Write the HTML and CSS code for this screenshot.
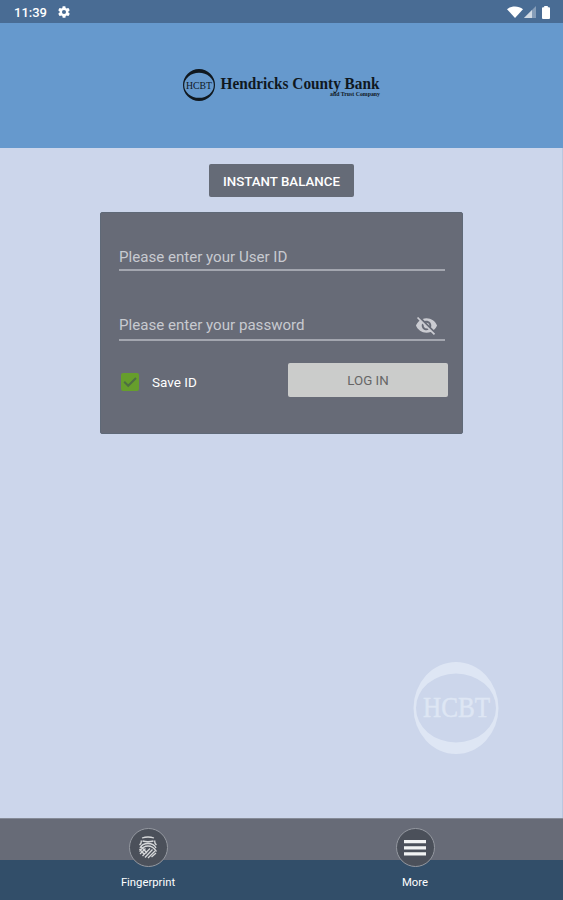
FILE: index.html
```
<!DOCTYPE html>
<html lang="en">

<head>
    <meta charset="UTF-8">
    <meta name="viewport" content="width=device-width, initial-scale=1.0">
    <title>Hendricks County Bank</title>
    <link rel="stylesheet" href="styles.css">
</head>

<body>
    <div class="status-bar">
        <span class="time">11:39</span>
        <svg class="gear" viewBox="0 0 24 24"><path fill-rule="evenodd" d="M19.4 13a7.5 7.5 0 0 0 0-2l2.1-1.7c.2-.1.3-.4.1-.6l-2-3.5c-.1-.2-.4-.3-.6-.2l-2.5 1a7.300 7.300 0 0 0-1.700-1l-.4-2.600A.5.5 0 0 0 14 2h-4a.5.5 0 0 0-.5.400L9.200 5a7.700 7.700 0 0 0-1.700 1L5 5a.5.5 0 0 0-.6.200l-2 3.500c-.1.2-.1.500.1.600L4.600 11a7.900 7.900 0 0 0 0 2l-2.100 1.700c-.2.100-.2.400-.1.600l2 3.500c.1.200.4.300.6.200l2.500-1c.5.400 1.100.8 1.700 1l.4 2.600c0 .2.200.400.400.400h4c.3 0 .5-.2.500-.400l.4-2.600c.6-.3 1.200-.6 1.700-1l2.500 1c.2.100.5 0 .6-.2l2-3.500c.1-.2.100-.5-.1-.600zM12 15.500a3.500 3.500 0 1 1 0-7 3.500 3.500 0 0 1 0 7z"/></svg>
        <div class="status-icons">
            <svg class="wifi" viewBox="0 0 16 12"><path d="M0 3.200C4.500-.4 11.500-.4 16 3.200L8 12z"/></svg>
            <svg class="signal" viewBox="0 0 12 12"><path class="signal-off" d="M0 12L12 0v12z"/><path d="M0 12l8-8v8z"/></svg>
            <svg class="battery" viewBox="0 0 8 13"><path d="M2.200 0h3.600v1.200H7q1 0 1 1V12q0 1-1 1H1q-1 0-1-1V2.200q0-1 1-1h1.200z"/></svg>
        </div>
    </div>

    <header class="header">
        <svg class="logo" viewBox="0 0 210 36">
            <path fill-rule="evenodd" d="M17 2a16 16 0 1 1 0 32a16 16 0 1 1 0-32zM17 5.800a14.800 12.500 0 1 0 0 25a14.800 12.500 0 1 0 0-25z"/>
            <text class="logo-mark" x="4" y="21.800" textLength="26" lengthAdjust="spacingAndGlyphs">HCBT</text>
            <text class="logo-name" x="38.500" y="21.500" textLength="159" lengthAdjust="spacingAndGlyphs">Hendricks County Bank</text>
            <text class="logo-sub" x="148" y="29" textLength="50" lengthAdjust="spacingAndGlyphs">and Trust Company</text>
        </svg>
    </header>

    <main class="main">
        <button class="balance-btn">INSTANT BALANCE</button>

        <div class="login-card">
            <div class="field user-field">Please enter your User ID</div>
            <div class="field password-field">
                <span>Please enter your password</span>
                <svg class="eye-off" viewBox="0 0 24 24"><path d="M12 7c2.760 0 5 2.240 5 5 0 .65-.13 1.260-.36 1.830l2.920 2.920c1.510-1.260 2.700-2.890 3.430-4.750-1.730-4.390-6-7.500-11-7.500-1.400 0-2.740.25-3.980.7l2.160 2.160C10.740 7.130 11.350 7 12 7zM2 4.270l2.280 2.280.46.460C3.080 8.300 1.780 10.020 1 12c1.730 4.390 6 7.500 11 7.500 1.550 0 3.030-.3 4.380-.84l.42.420L19.730 22 21 20.730 3.270 3 2 4.270zM7.530 9.800l1.550 1.550c-.05.210-.08.430-.08.650 0 1.660 1.340 3 3 3 .22 0 .44-.03.650-.08l1.550 1.550c-.67.330-1.410.53-2.200.53-2.760 0-5-2.240-5-5 0-.79.200-1.530.53-2.200zm4.310-.78l3.150 3.150.02-.16c0-1.660-1.340-3-3-3l-.17.010z"/></svg>
            </div>
            <div class="login-row">
                <span class="checkbox">
                    <svg viewBox="0 0 18 18"><path d="M3.200 8.800l4 4L15 5"/></svg>
                </span>
                <span class="save-label">Save ID</span>
                <button class="login-btn">LOG IN</button>
            </div>
        </div>

        <svg class="watermark" viewBox="0 0 86 92">
            <path fill-rule="evenodd" d="M43 0a42.500 46 0 1 1 0 92a42.500 46 0 1 1 0-92zM43 11.500a40 34.500 0 1 0 0 69a40 34.500 0 1 0 0-69z"/>
            <text x="10" y="55" textLength="67" lengthAdjust="spacingAndGlyphs">HCBT</text>
        </svg>
    </main>

    <nav class="bottom-nav">
        <div class="nav-item">
            <span class="nav-icon">
                <svg class="fingerprint" viewBox="0 0 20 23">
                    <path d="M4 2Q10 0 16 2M4.500 5Q10 6.500 15.500 5M3 4.500Q4 7 1.500 9M17 4.500Q16 7 18.500 9M2 12Q4 7.500 10 7.500T18 12M1.500 15.500Q5 10 10 10T18.500 15.500M2 18L7.500 12.500M4.500 20L12 12.500M7 21.500L14.500 13.500M10 22L17 15M13.500 21L18 17M3 10.500L9 17M1.500 13L6 18"/>
                </svg>
            </span>
            <span class="nav-label">Fingerprint</span>
        </div>
        <div class="nav-item">
            <span class="nav-icon">
                <svg class="menu" viewBox="0 0 22 16"><path d="M0 0h22v3.200H0zM0 6.200h22v3.200H0zM0 12.300h22v3.200H0z"/></svg>
            </span>
            <span class="nav-label">More</span>
        </div>
    </nav>
</body>

</html>
```

FILE: styles.css
```
* {
    box-sizing: border-box;
}

body {
    margin: 0;
    height: 900px;
    display: flex;
    flex-direction: column;
    overflow: hidden;
    font-family: Roboto, "Liberation Sans", sans-serif;
    background-color: #ccd6eb;
}

svg {
    display: block;
    flex-shrink: 0;
}

button {
    border: 0;
    padding: 0;
    font-family: inherit;
}

.status-bar {
    height: 23px;
    flex-shrink: 0;
    display: flex;
    align-items: center;
    padding: 1px 13px 0 14px;
    background-color: #496c94;
    color: #fff;
}

.status-bar svg {
    fill: #fff;
}

.time {
    width: 43px;
    font-size: 13px;
    font-weight: 500;
}

.gear {
    width: 14px;
    height: 14px;
}

.status-icons {
    display: flex;
    align-items: center;
    margin-left: auto;
}

.wifi {
    width: 16px;
    height: 12px;
}

.signal {
    width: 12px;
    height: 12px;
    margin-left: 1px;
    opacity: 0.75;
}

.signal-off {
    opacity: 0.45;
}

.battery {
    width: 8px;
    height: 13px;
    margin-left: 6px;
}

.header {
    height: 125px;
    flex-shrink: 0;
    padding: 44px 0 0 182px;
    background-color: #6699cd;
}

.logo {
    width: 210px;
    height: 36px;
    fill: #10181f;
    font-family: "Liberation Serif", serif;
}

.logo-mark {
    font-size: 11px;
}

.logo-name {
    font-size: 17px;
    font-weight: bold;
}

.logo-sub {
    font-size: 6px;
    font-weight: bold;
}

.main {
    flex: 1;
    display: flex;
    flex-direction: column;
    align-items: center;
    padding-top: 16px;
    box-shadow: inset -1px 0 #b9c7df;
}

.balance-btn {
    width: 145px;
    height: 33px;
    padding-top: 1px;
    border-radius: 2px;
    background-color: #656b77;
    color: #fff;
    font-size: 13.3px;
    font-weight: 500;
}

.login-card {
    width: 363px;
    height: 222px;
    margin-top: 15px;
    padding: 24px 14px 0 18px;
    border: 1px solid #5f6977;
    border-radius: 2px;
    background-color: #676b77;
}

.field {
    width: 326px;
    display: flex;
    align-items: center;
    justify-content: space-between;
    border-bottom: 2px solid #a3a6af;
    color: #c8cad0;
    font-size: 15.1px;
}

.user-field {
    height: 34px;
    padding-top: 7px;
}

.password-field {
    height: 36px;
    margin-top: 34px;
    padding: 6px 7px 0 0;
}

.eye-off {
    width: 23px;
    height: 23px;
    fill: #cbccd2;
}

.login-row {
    display: flex;
    align-items: center;
    margin-top: 22px;
}

.checkbox {
    width: 18px;
    height: 18px;
    margin: 4px 0 0 2px;
    border-radius: 2px;
    background-color: #669e2c;
}

.checkbox svg {
    fill: none;
    stroke: #4e6e43;
    stroke-width: 2;
}

.save-label {
    margin: 4px 0 0 13px;
    color: #fff;
    font-size: 13.5px;
}

.login-btn {
    width: 160px;
    height: 34px;
    margin-left: auto;
    padding-top: 1px;
    border-radius: 2px;
    background-color: #cbcccb;
    color: #666;
    font-size: 13.3px;
}

.watermark {
    width: 86px;
    height: 92px;
    margin: auto 64px 64px auto;
    fill: #dee6f4;
    font-family: "Liberation Serif", serif;
    font-size: 29px;
}

.watermark text {
    stroke: #dee6f4;
    stroke-width: 0.5;
}

.bottom-nav {
    height: 82px;
    flex-shrink: 0;
    display: flex;
    justify-content: space-between;
    padding: 0 113px;
    border-top: 1px solid #858b97;
    background: linear-gradient(#676b77 41px, #324e69 41px);
}

.nav-item {
    width: 70px;
    display: flex;
    flex-direction: column;
    align-items: center;
    padding-top: 9px;
}

.nav-icon {
    width: 39px;
    height: 39px;
    display: flex;
    align-items: center;
    justify-content: center;
    border: 1.5px solid #9498a0;
    border-radius: 50%;
    background-color: #4b505a;
}

.fingerprint {
    width: 20px;
    height: 23px;
    fill: none;
    stroke: #d6d8da;
    stroke-width: 1.3;
}

.menu {
    width: 22px;
    height: 16px;
    fill: #f2f3f3;
}

.nav-label {
    margin-top: 9px;
    color: #fff;
    font-size: 11.3px;
    line-height: 13px;
}
```
